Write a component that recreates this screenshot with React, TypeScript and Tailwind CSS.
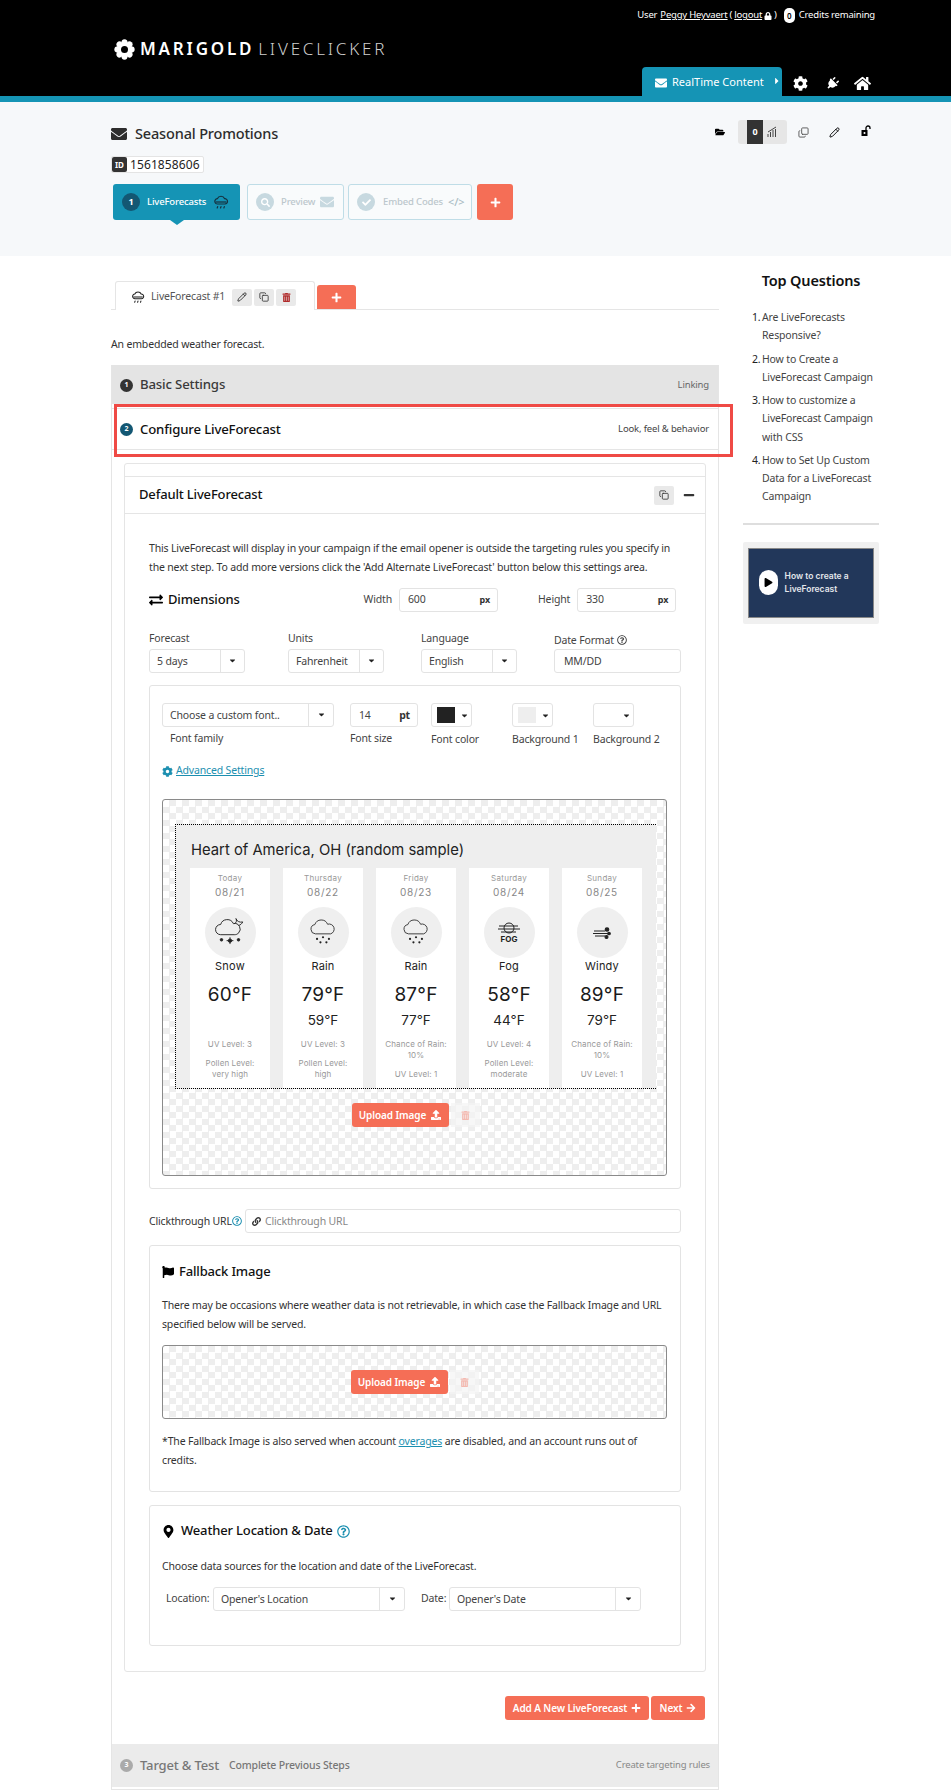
import React from "react";
import { FaEnvelope, FaCog, FaPlug, FaHome, FaLock, FaCaretRight, FaCaretDown, FaFolderOpen, FaPlus, FaSearch, FaCheck, FaUpload, FaArrowRight, FaFlag, FaExchangeAlt, FaTrashAlt, FaLink, FaPlay, FaRegQuestionCircle, FaMapMarkerAlt, FaMinus } from "react-icons/fa";
import { Pencil, Copy } from "lucide-react";

const checker = "bg-[conic-gradient(#eeeeee_25%,#ffffff_0_50%,#eeeeee_0_75%,#ffffff_0)] bg-[length:13px_13px]";

function Marigold() {
  const petals = [0, 45, 90, 135, 180, 225, 270, 315];
  return (
    <svg width="21" height="21" viewBox="0 0 24 24">
      {petals.map((a) => (
        <ellipse key={a} cx="12" cy="4.6" rx="3.6" ry="4.2" fill="#fff" transform={`rotate(${a} 12 12)`} />
      ))}
      <circle cx="12" cy="12" r="7" fill="#fff" />
      <circle cx="12" cy="12" r="4" fill="#000" />
    </svg>
  );
}

function CloudRain({ size = 16, color = "#222" }: { size?: number; color?: string }) {
  return (
    <svg width={size} height={size} viewBox="0 0 24 24" fill="none" stroke={color} strokeWidth="1.8">
      <path d="M7 15a4 4 0 0 1-.5-8A6 6 0 0 1 17.5 7 4 4 0 0 1 18 15Z" />
      <path d="M4 12h16" />
      <path d="M7 19l-.7 2M12 19l-.7 2M17 19l-.7 2" strokeLinecap="round" />
    </svg>
  );
}

function Sel({ w, text, tail }: { w: string; text: string; tail: string }) {
  return (
    <div className={`${w} h-6 flex border border-[#e3e3e3] rounded-[3px] bg-white text-[#444]`}>
      <div className="flex-1 flex items-center pl-[7px] pt-[1px] whitespace-nowrap overflow-hidden">{text}</div>
      <div className={`${tail} border-l border-[#e3e3e3] flex items-center justify-center text-[#222] pb-[2px]`}>
        <FaCaretDown size={9} />
      </div>
    </div>
  );
}

function Swatch({ inner }: { inner: string }) {
  return (
    <div className="w-[41px] h-6 border border-[#e3e3e3] rounded-[3px] bg-white flex items-center pl-[5px] gap-[5px]">
      <div className={`w-[18px] h-[16px] ${inner}`} />
      <FaCaretDown size={9} className="text-[#222]" />
    </div>
  );
}

function Upload() {
  return (
    <div className="flex items-center">
      <div className="w-[97px] h-6 rounded-[3px] bg-[#f56e56] text-white font-semibold text-[10px] tracking-[-0.1px] flex items-center justify-center gap-[5px]">
        Upload Image <FaUpload size={10} />
      </div>
      <div className="ml-[2px] w-[29px] h-6 flex items-center justify-center bg-[#f3f3f3]/70">
        <FaTrashAlt size={9} className="text-[#f3b9b0]" />
      </div>
    </div>
  );
}

type Day = { d: string; date: string; c: string; hi: string; lo?: string; lines: string[][]; icon: React.ReactNode };

const snowDots = (
  <g fill="#222" stroke="none">
    <circle cx="13" cy="25" r="1.3" /><circle cx="20" cy="23" r="1.3" /><circle cx="27" cy="25" r="1.3" /><circle cx="17" cy="29" r="1.3" /><circle cx="24" cy="29" r="1.3" />
  </g>
);
const cloud = <path d="M11 19a5.5 5.5 0 0 1-.6-10.9 8 8 0 0 1 15-.4A5.5 5.5 0 0 1 29 19Z" fill="none" stroke="#222" strokeWidth="1" />;

const days: Day[] = [
  {
    d: "Today", date: "08/21", c: "Snow", hi: "60°F", lines: [["UV Level: 3"], ["Pollen Level:", "very high"]],
    icon: (
      <svg width="34" height="34" viewBox="0 0 40 40" fill="none" stroke="#222" strokeWidth="1.1">
        <path d="M9 22a6 6 0 0 1 0-12 8 8 0 0 1 15-1 6.5 6.5 0 0 1 6 11c-1 1.5-3 2-5 2Z" />
        <path d="M25 9c3-1 3-4 2-6 1 3 4 5 8 4-1 2-3 4-5 4" />
        <circle cx="20" cy="29" r="2" fill="#222" />
        <path d="M20 25v8M16 29h8" />
        <circle cx="10" cy="28" r="1.5" fill="#222" /><circle cx="30" cy="28" r="1.5" fill="#222" />
      </svg>
    ),
  },
  {
    d: "Thursday", date: "08/22", c: "Rain", hi: "79°F", lo: "59°F", lines: [["UV Level: 3"], ["Pollen Level:", "high"]],
    icon: <svg width="34" height="34" viewBox="0 0 40 36">{cloud}{snowDots}</svg>,
  },
  {
    d: "Friday", date: "08/23", c: "Rain", hi: "87°F", lo: "77°F", lines: [["Chance of Rain:", "10%"], ["UV Level: 1"], ["Pollen Level: low"]],
    icon: <svg width="34" height="34" viewBox="0 0 40 36">{cloud}{snowDots}</svg>,
  },
  {
    d: "Saturday", date: "08/24", c: "Fog", hi: "58°F", lo: "44°F", lines: [["UV Level: 4"], ["Pollen Level:", "moderate"]],
    icon: (
      <svg width="30" height="30" viewBox="0 0 30 30" fill="none" stroke="#222" strokeWidth="1">
        <circle cx="15" cy="10" r="5" />
        <path d="M5 8h19M4 11h22M7 14h15" />
        <text x="15" y="24" textAnchor="middle" fontSize="8" fontWeight="700" fill="#222" stroke="none" fontFamily="Inter, sans-serif">FOG</text>
      </svg>
    ),
  },
  {
    d: "Sunday", date: "08/25", c: "Windy", hi: "89°F", lo: "79°F", lines: [["Chance of Rain:", "10%"], ["UV Level: 1"], ["Pollen Level: low"]],
    icon: (
      <svg width="20" height="20" viewBox="0 0 20 20" fill="none" stroke="#222" strokeWidth="1.1">
        <path d="M2 8h11M1 10.5h15M3 13h10" />
        <circle cx="15" cy="6.5" r="1.8" fill="#222" /><circle cx="17" cy="10.5" r="1.3" fill="#222" /><circle cx="14.5" cy="14" r="1.5" fill="#222" />
      </svg>
    ),
  },
];

function DayCard({ day }: { day: Day }) {
  return (
    <div className="w-[80px] h-[260px] bg-white text-center shrink-0">
      <div className="pt-[1px] h-[19px] text-[8px] leading-[18px] tracking-[0.3px] text-[#999]">{day.d}</div>
      <div className="mt-[-1px] text-[10px] leading-[12px] text-[#888] tracking-[0.7px]">{day.date}</div>
      <div className="mx-auto mt-[9px] w-[51px] h-[51px] rounded-full bg-[#efefef] flex items-center justify-center">{day.icon}</div>
      <div className="text-[11px] leading-[16px] tracking-[0.2px] text-[#222]">{day.c}</div>
      <div className="mt-[9px] text-[19px] leading-[24px] tracking-[0.2px] text-[#1a1a1a]">{day.hi}</div>
      <div className="mt-[1px] h-[24px] text-[13.5px] leading-[24px] text-[#222]">{day.lo ?? ""}</div>
      <div className="mt-[7px] text-[8px] leading-[11px] tracking-[0.1px] text-[#999] whitespace-nowrap">
        {day.lines.map((ls, i) => (
          <div key={i} className="mb-[8px]">
            {ls.map((l) => <div key={l}>{l}</div>)}
          </div>
        ))}
      </div>
    </div>
  );
}

function StepNum({ n, cls }: { n: number; cls: string }) {
  return <div className={`w-[13px] h-[13px] rounded-full ${cls} text-white text-[7px] font-bold flex items-center justify-center`}>{n}</div>;
}

export default function App() {
  return (
    <div className="w-[951px] h-[1792px] overflow-hidden bg-white text-[10.5px] tracking-[-0.16px] text-[#333] font-['Noto_Sans',sans-serif]">
      {/* header */}
      <div className="h-[96px] bg-black text-white relative">
        <div className="flex justify-end items-center pr-[76px] pt-[7px] h-[24px] text-[9.5px] gap-[7px] tracking-[-0.2px]">
          <span className="flex items-center gap-[2px]">User <u className="ml-[1px]">Peggy Heyvaert</u> (<u>logout</u> <FaLock size={8} /> )</span>
          <span className="flex items-center gap-[4px]">
            <span className="w-[11px] h-[15px] rounded-[5px] bg-white text-black flex items-center justify-center text-[8px] font-semibold">0</span>
            Credits remaining
          </span>
        </div>
        <div className="ml-[114px] mt-[14px] flex items-center gap-[3px] h-[22px] tracking-[2.8px]">
          <Marigold />
          <span className="text-[17px] font-semibold ml-[2px]">MARIGOLD</span>
          <span className="text-[17px] font-light text-[#cfcfcf] ml-[1px]">LIVECLICKER</span>
        </div>
        <div className="absolute left-[642px] top-[67px] flex items-center">
          <div className="w-[140px] h-[29px] rounded-t-[4px] bg-[#1594b5] flex items-center pl-[13px] pt-[2px] gap-[5px] text-[11px] whitespace-nowrap tracking-[0px]">
            <FaEnvelope size={12} /> RealTime Content <FaCaretRight size={10} className="ml-[3px] mt-[-3px]" />
          </div>
          <div className="flex items-center pt-[3px]">
            <FaCog size={15} className="ml-[11px]" />
            <FaPlug size={13} className="ml-[18px] rotate-45" />
            <FaHome size={17} className="ml-[15px]" />
          </div>
        </div>
      </div>
      <div className="h-[6px] bg-[#1594b5]" />

      {/* hero */}
      <div className="h-[154px] bg-[#f6f8fa] pl-[111px] relative">
        <div className="pt-[20px] h-[54px] flex items-start justify-between pr-[79px]">
          <div className="flex items-center gap-[8px] h-[24px] text-[#2d2d2d]">
            <FaEnvelope size={16} />
            <span className="text-[14.5px] font-medium">Seasonal Promotions</span>
          </div>
          <div className="flex items-center text-black mt-[-2px]">
            <FaFolderOpen size={10} />
            <div className="ml-[13px] w-[49px] h-6 rounded-[3px] bg-[#e6e6e6] flex items-center pl-[9px]">
              <div className="w-[16px] h-6 bg-[#333] text-white text-[9px] font-bold flex items-center justify-center">0</div>
              <svg width="11" height="12" viewBox="0 0 11 12" className="ml-[4px]" fill="none" stroke="#444" strokeWidth="1"><path d="M1 11V8M3.5 11V6M6 11V4M8.5 11V3M1 6l8-5" /></svg>
            </div>
            <Copy size={11} className="ml-[11px] text-[#555] -scale-y-100" />
            <Pencil size={11} className="ml-[20px]" />
            <svg width="11" height="12" viewBox="0 0 11 12" className="ml-[21px] mt-[-3px]" fill="none">
              <rect x="0.5" y="5" width="6" height="6" fill="#000" />
              <circle cx="3.5" cy="8" r="1" fill="#fff" />
              <path d="M5 5V3a2 2 0 0 1 4 0v1" stroke="#000" strokeWidth="1.3" />
            </svg>
          </div>
        </div>
        <div className="inline-flex h-[17px] items-center border border-[#e4e4e4] rounded-[2px] bg-white text-[12px] text-[#222] pr-[3px] tracking-[0.1px]">
          <span className="w-[15px] h-[15px] bg-[#333] rounded-[2px] text-white text-[8px] font-bold flex items-center justify-center mr-[3px]">ID</span>1561858606
        </div>
        <div className="flex mt-[11px] ml-[2px] h-[36px] items-stretch text-[9.5px] font-medium">
          <div className="relative w-[127px] rounded-[3px] bg-[#1594b5] text-white flex items-center pl-[9px]">
            <div className="w-[18px] h-[18px] rounded-full bg-[#135773] text-[9px] flex items-center justify-center font-bold">1</div>
            <span className="ml-[7px]">LiveForecasts</span>
            <span className="ml-[7px]"><CloudRain size={16} color="#16303e" /></span>
            <div className="absolute left-[57px] top-[36px] w-0 h-0 border-l-[7px] border-r-[7px] border-t-[5px] border-l-transparent border-r-transparent border-t-[#1594b5]" />
          </div>
          <div className="ml-[7px] w-[97px] rounded-[3px] border border-[#bfdde7] bg-white/40 text-[#bcc7cc] flex items-center pl-[8px]">
            <div className="w-[18px] h-[18px] rounded-full bg-[#c7d9e0] text-white flex items-center justify-center"><FaSearch size={9} /></div>
            <span className="ml-[7px]">Preview</span>
            <FaEnvelope size={14} className="ml-[5px] text-[#c7d9e0]" />
          </div>
          <div className="ml-[4px] w-[124px] rounded-[3px] border border-[#bfdde7] bg-white/40 text-[#bcc7cc] flex items-center pl-[8px]">
            <div className="w-[18px] h-[18px] rounded-full bg-[#c7d9e0] text-white flex items-center justify-center"><FaCheck size={9} /></div>
            <span className="ml-[8px]">Embed Codes</span>
            <span className="ml-[5px] text-[11px] text-[#a9bcc4]">&lt;/&gt;</span>
          </div>
          <div className="ml-[5px] w-[36px] rounded-[3px] bg-[#f56e56] text-white flex items-center justify-center"><FaPlus size={11} /></div>
        </div>
      </div>

      {/* body */}
      <div className="flex pl-[111px]">
        <div className="w-[608px] relative">
          <div className="pt-[25px] h-[54px] border-b border-[#e5e5e5] flex items-end pl-[4px]">
            <div className="w-[200px] h-[29px] mb-[-1px] bg-white border border-b-0 border-[#e5e5e5] rounded-t-[3px] flex items-center pl-[15px] pt-[2px] text-[#555]">
              <CloudRain size={14} />
              <span className="ml-[6px]">LiveForecast #1</span>
              <span className="ml-[7px] w-5 h-[17px] rounded-[2px] bg-[#e9e9e9] flex items-center justify-center text-[#222]"><Pencil size={10} /></span>
              <span className="ml-[2px] w-5 h-[17px] rounded-[2px] bg-[#e9e9e9] flex items-center justify-center text-[#333]"><Copy size={10} /></span>
              <span className="ml-[2px] w-5 h-[17px] rounded-[2px] bg-[#e9e9e9] flex items-center justify-center text-[#b02a2a]"><FaTrashAlt size={9} /></span>
            </div>
            <div className="ml-[2px] w-[39px] h-6 rounded-t-[3px] bg-[#f56e56] text-white flex items-center justify-center"><FaPlus size={11} /></div>
          </div>
          <div className="h-[55px] flex items-center pt-[14px] text-[#333]">An embedded weather forecast.</div>

          <div className="border-x border-[#e5e5e5]">
            <div className="h-[39px] bg-[#e4e4e4] flex items-center px-[8px] pt-[1px]">
              <StepNum n={1} cls="bg-[#333]" />
              <span className="ml-[7px] text-[13.2px] font-medium text-[#3a3a3a]">Basic Settings</span>
              <span className="ml-auto text-[9.5px] text-[#666] mr-[1px]">Linking</span>
            </div>
            <div className="h-[42px] border-y border-[#e5e5e5] mt-[4px] flex items-center px-[8px] pt-[1px] bg-white">
              <StepNum n={2} cls="bg-[#135773]" />
              <span className="ml-[7px] text-[13.2px] font-medium text-[#111]">Configure LiveForecast</span>
              <span className="ml-auto text-[9.5px] text-[#444] mr-[1px]">Look, feel &amp; behavior</span>
            </div>

            {/* default card */}
            <div className="mx-[12px] mt-[13px] h-[1209px] pt-[12px] border border-[#e5e5e5] rounded-[3px]">
              <div className="h-[38px] border-y border-[#e5e5e5] flex items-center pl-[14px] pr-[10px]">
                <span className="text-[13px] font-medium text-[#111]">Default LiveForecast</span>
                <span className="ml-auto w-5 h-[19px] rounded-[2px] bg-[#e9e9e9] flex items-center justify-center text-[#333]"><Copy size={10} /></span>
                <FaMinus size={12} className="ml-[9px] text-[#333]" />
              </div>
              <div className="px-[24px]">
                <p className="pt-[25px] leading-[19px] text-[#333]">
                  This LiveForecast will display in your campaign if the email opener is outside the targeting rules you specify in the next step. To add more versions click the 'Add Alternate LiveForecast' button below this settings area.
                </p>
                <div className="mt-[11px] h-6 flex items-center">
                  <FaExchangeAlt size={14} className="text-black" />
                  <span className="ml-[5px] text-[13px] font-medium text-[#111]">Dimensions</span>
                  <span className="ml-[124px] text-[#444]">Width</span>
                  <div className="ml-[7px] w-[99px] h-6 border border-[#e3e3e3] rounded-[3px] flex items-center justify-between pl-[8px] pr-[7px] text-[#444]">600<b className="text-[9px] text-[#333]">px</b></div>
                  <span className="ml-[40px] text-[#444]">Height</span>
                  <div className="ml-[7px] w-[99px] h-6 border border-[#e3e3e3] rounded-[3px] flex items-center justify-between pl-[8px] pr-[7px] text-[#444]">330<b className="text-[9px] text-[#333]">px</b></div>
                </div>
                <div className="mt-[18px] flex text-[#444]">
                  <div className="w-[96px]">
                    <div className="h-[19px] leading-[16px]">Forecast</div>
                    <Sel w="w-[96px]" text="5 days" tail="w-[24px]" />
                  </div>
                  <div className="ml-[43px] w-[96px]">
                    <div className="h-[19px] leading-[16px]">Units</div>
                    <Sel w="w-[96px]" text="Fahrenheit" tail="w-[24px]" />
                  </div>
                  <div className="ml-[37px] w-[96px]">
                    <div className="h-[19px] leading-[16px]">Language</div>
                    <Sel w="w-[96px]" text="English" tail="w-[24px]" />
                  </div>
                  <div className="ml-[37px] w-[127px]">
                    <div className="h-[19px] leading-[16px] flex items-center gap-[3px]">Date Format <FaRegQuestionCircle size={10} /></div>
                    <div className="h-6 border border-[#e3e3e3] rounded-[3px] flex items-center pl-[9px] pt-[1px]">MM/DD</div>
                  </div>
                </div>

                <div className="mt-[12px] h-[504px] border border-[#e3e3e3] rounded-[3px] px-[12px] pt-[17px]">
                  <div className="flex text-[#444] h-[52px]">
                    <div className="w-[172px]">
                      <Sel w="w-[172px]" text="Choose a custom font.." tail="w-[25px]" />
                      <div className="mt-[3px] pl-[8px] leading-[16px]">Font family</div>
                    </div>
                    <div className="ml-[16px] w-[68px]">
                      <div className="h-6 border border-[#e3e3e3] rounded-[3px] flex items-center justify-between pl-[8px] pr-[7px] pt-[1px]">14<b className="text-[#333]">pt</b></div>
                      <div className="mt-[3px] leading-[16px]">Font size</div>
                    </div>
                    <div className="ml-[13px] w-[41px]">
                      <Swatch inner="bg-[#222222]" />
                      <div className="mt-[4px] leading-[16px] whitespace-nowrap">Font color</div>
                    </div>
                    <div className="ml-[40px] w-[41px]">
                      <Swatch inner="bg-[#eeeeee]" />
                      <div className="mt-[4px] leading-[16px] whitespace-nowrap">Background 1</div>
                    </div>
                    <div className="ml-[40px] w-[41px]">
                      <Swatch inner="bg-white" />
                      <div className="mt-[4px] leading-[16px] whitespace-nowrap">Background 2</div>
                    </div>
                  </div>
                  <div className="mt-[6px] h-[20px] flex items-center text-[#1c8fb0]">
                    <FaCog size={11} /><u className="ml-[3px]">Advanced Settings</u>
                  </div>
                  <div className={`mt-[18px] w-[505px] h-[377px] border border-[#8a8a8a] rounded-[3px] pt-[24px] pl-[12px] font-['Inter',sans-serif] tracking-normal ${checker}`}>
                    <div className="w-[481px] h-[265px] bg-[#eeeeee] border-y border-l border-dotted border-black overflow-hidden pl-[14px]">
                      <div className="h-[43px] pt-[15px] pl-[1px] text-[14.8px] leading-[20px] text-[#222] whitespace-nowrap">Heart of America, OH (random sample)</div>
                      <div className="flex gap-[13px]">
                        {days.map((d) => <DayCard key={d.d} day={d} />)}
                      </div>
                    </div>
                    <div className="mt-[14px] w-[481px] flex justify-center font-['Noto_Sans',sans-serif]"><Upload /></div>
                  </div>
                </div>

                <div className="mt-[20px] h-6 flex items-center text-[#333]">
                  <span className="pt-[2px]">Clickthrough URL</span>
                  <FaRegQuestionCircle size={10} className="text-[#1c8fb0]" />
                  <div className="ml-auto w-[436px] h-6 border border-[#e3e3e3] rounded-[3px] flex items-center pl-[6px] pt-[1px] text-[#888]">
                    <FaLink size={9} className="text-[#333] mr-[4px]" /> Clickthrough URL
                  </div>
                </div>

                <div className="mt-[12px] h-[247px] border border-[#e3e3e3] rounded-[3px] px-[12px] pt-[16px]">
                  <div className="h-[20px] flex items-center">
                    <FaFlag size={12} className="text-black" />
                    <span className="ml-[5px] text-[13px] font-medium text-[#111]">Fallback Image</span>
                  </div>
                  <p className="mt-[14px] leading-[19px]">There may be occasions where weather data is not retrievable, in which case the Fallback Image and URL specified below will be served.</p>
                  <div className={`mt-[11px] w-[505px] h-[74px] border border-[#8a8a8a] rounded-[3px] flex items-center justify-center ${checker}`}><Upload /></div>
                  <p className="mt-[13px] leading-[19px]">*The Fallback Image is also served when account <u className="text-[#1c8fb0]">overages</u> are disabled, and an account runs out of credits.</p>
                </div>

                <div className="mt-[13px] h-[141px] border border-[#e3e3e3] rounded-[3px] px-[12px] pt-[15px]">
                  <div className="h-[20px] flex items-center">
                    <FaMapMarkerAlt size={13} className="text-black" />
                    <span className="ml-[6px] text-[13px] font-medium text-[#111]">Weather Location &amp; Date</span>
                    <FaRegQuestionCircle size={13} className="ml-[4px] text-[#1c8fb0]" />
                  </div>
                  <p className="mt-[16px] leading-[19px]">Choose data sources for the location and date of the LiveForecast.</p>
                  <div className="mt-[11px] flex items-center text-[#444]">
                    <span className="ml-[4px] w-[47px]">Location:</span>
                    <Sel w="w-[192px]" text="Opener's Location" tail="w-[25px]" />
                    <span className="ml-[16px] w-[28px]">Date:</span>
                    <Sel w="w-[192px]" text="Opener's Date" tail="w-[25px]" />
                  </div>
                </div>
              </div>
            </div>

            <div className="mt-[24px] flex justify-end pr-[13px] gap-[2px] font-semibold text-white text-[10px] tracking-[-0.1px]">
              <div className="w-[144px] h-6 rounded-[3px] bg-[#f56e56] flex items-center justify-center gap-[4px]">Add A New LiveForecast <FaPlus size={10} /></div>
              <div className="w-[54px] h-6 rounded-[3px] bg-[#f56e56] flex items-center justify-center gap-[4px]">Next <FaArrowRight size={10} /></div>
            </div>
            <div className="mt-[24px] h-[43px] bg-[#ebebeb] flex items-center px-[8px] text-[#888]">
              <StepNum n={3} cls="bg-[#aaaaaa]" />
              <span className="ml-[7px] text-[13px] font-medium text-[#777]">Target &amp; Test</span>
              <span className="ml-[10px] text-[10.5px] font-medium text-[#777]">Complete Previous Steps</span>
              <span className="ml-auto text-[9.5px]">Create targeting rules</span>
            </div>
            <div className="h-[2px]" />
            <div className="border-t border-[#e5e5e5]" />
          </div>

          {/* annotation */}
          <div className="absolute left-[3px] top-[148px] w-[619px] h-[53px] border-[3px] border-[#ef4a45] pointer-events-none" />
        </div>

        {/* sidebar */}
        <div className="ml-[24px] w-[136px] pt-[14px]">
          <div className="text-center text-[14.5px] font-semibold text-[#111] leading-[20px]">Top Questions</div>
          <ol className="mt-[18px] pl-[9px] text-[10.5px] leading-[18.25px] text-[#444]">
            {[
              "Are LiveForecasts Responsive?",
              "How to Create a LiveForecast Campaign",
              "How to customize a LiveForecast Campaign with CSS",
              "How to Set Up Custom Data for a LiveForecast Campaign",
            ].map((q, i) => (
              <li key={q} className="flex mb-[5px]">
                <span className="w-[9px] shrink-0 text-[#222]">{i + 1}.</span>
                <span className="ml-[1px]">{q}</span>
              </li>
            ))}
          </ol>
          <div className="mt-[17px] h-[2px] bg-[#dedede]" />
          <div className="mt-[17px] h-[82px] rounded-[2px] bg-[#f0f0f0] px-[5px] py-[6px]">
            <div className="h-[70px] bg-[#22375a] border border-[#888] flex items-center pl-[10px]">
              <div className="w-[25px] h-[25px] rounded-full bg-white flex items-center justify-center text-black"><FaPlay size={9} className="ml-[1px]" /></div>
              <div className="ml-[7px] text-[8.5px] leading-[13px] tracking-normal font-semibold text-[#e4e7ec] font-['Inter',sans-serif]">How to create a LiveForecast</div>
            </div>
          </div>
        </div>
      </div>
    </div>
  );
}
